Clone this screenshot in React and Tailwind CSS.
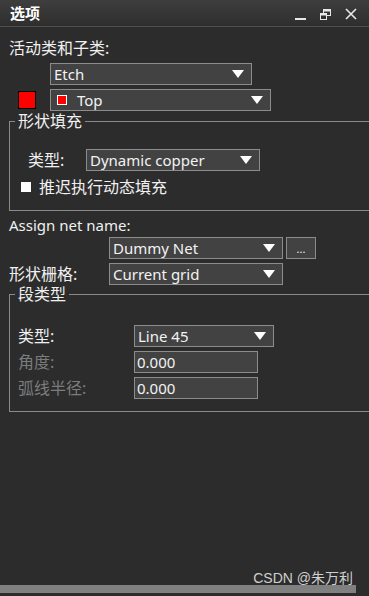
import React from "react";

const font = { fontFamily: '"Noto Sans", "Noto Sans CJK SC", sans-serif' };

const Arrow = () => (
  <svg width="12" height="8" viewBox="0 0 12 8" className="shrink-0">
    <path d="M0 0 H12 L6 8 Z" fill="#ffffff" />
  </svg>
);

const Combo = ({ className, children }) => (
  <div className={`flex items-center h-[22px] border border-[#8c8c8c] bg-[#424242] pl-[3px] pr-[7px] ${className}`}>
    <div className="flex-1 flex items-center text-[15px] leading-none text-[#f2f2f2]">{children}</div>
    <Arrow />
  </div>
);

const Field = ({ className, value }) => (
  <div className={`flex items-center h-[22px] border border-[#8c8c8c] bg-[#424242] pl-[2px] text-[15px] leading-none text-[#f2f2f2] ${className}`}>
    {value}
  </div>
);

const App = () => {
  return (
    <div className="w-[369px] h-[596px] overflow-hidden bg-[#2c2c2c] relative select-none" style={font}>
      {/* Title bar */}
      <div className="h-[27px] flex items-center justify-between bg-gradient-to-b from-[#3e3e3e] to-[#2e2e2e] border-b border-[#4e4e4e] pl-[10px] pr-[12px]">
        <span className="text-[15px] font-bold text-white leading-none">选项</span>
        <div className="flex items-center gap-[14px] pt-[2px]">
          <svg width="11" height="11" viewBox="0 0 11 11">
            <rect x="0" y="9" width="11" height="2" fill="#e8e8e8" />
          </svg>
          <svg width="11" height="11" viewBox="0 0 11 11">
            <rect x="3.5" y="0.5" width="7" height="6" fill="none" stroke="#e8e8e8" />
            <rect x="3.5" y="0.5" width="7" height="2" fill="#e8e8e8" />
            <rect x="0.5" y="4.5" width="6" height="6" fill="#2e2e2e" stroke="#e8e8e8" />
            <rect x="0.5" y="4.5" width="6" height="2" fill="#e8e8e8" />
          </svg>
          <svg width="12" height="12" viewBox="0 0 12 12">
            <path d="M1 1 L11 11 M11 1 L1 11" stroke="#e8e8e8" strokeWidth="1.6" />
          </svg>
        </div>
      </div>

      {/* Active class/subclass */}
      <div className="pl-[9px] pt-[13px] text-[16px] leading-none text-[#f0f0f0]">活动类和子类:</div>
      <div className="flex flex-col gap-[4px] mt-[7px]">
        <Combo className="ml-[50px] w-[202px]">Etch</Combo>
        <div className="flex items-center">
          <div className="ml-[18px] w-[18px] h-[18px] bg-[#ff0000] border border-black" />
          <Combo className="ml-[14px] w-[221px]">
            <span className="ml-[3px] w-[10px] h-[10px] bg-[#ff0000] border border-white" />
            <span className="ml-[10px]">Top</span>
          </Combo>
        </div>
      </div>

      {/* Shape fill group */}
      <fieldset className="ml-[9px] w-[400px] mt-[2px] border border-[#8a8a8a] pt-[20px] h-[98px]">
        <legend className="ml-[5px] px-[3px] text-[16px] leading-none text-[#f0f0f0]">形状填充</legend>
        <div className="flex items-center">
          <span className="ml-[18px] w-[58px] text-[16px] leading-none text-[#f0f0f0]">类型:</span>
          <Combo className="w-[174px]">Dynamic copper</Combo>
        </div>
        <div className="flex items-center mt-[8px]">
          <span className="ml-[11px] w-[10px] h-[10px] bg-white" />
          <span className="ml-[8px] text-[16px] leading-none text-[#f0f0f0]">推迟执行动态填充</span>
        </div>
      </fieldset>

      {/* Net name */}
      <div className="pl-[9px] pt-[7px] text-[15px] leading-none text-[#f0f0f0]">Assign net name:</div>
      <div className="flex items-center mt-[4px] ml-[109px]">
        <Combo className="w-[174px]">Dummy Net</Combo>
        <div className="ml-[3px] w-[30px] h-[22px] border border-[#8c8c8c] bg-[#424242] flex items-end justify-center pb-[4px] text-[11px] leading-none text-[#f0f0f0]">...</div>
      </div>
      <div className="flex items-center mt-[4px]">
        <span className="ml-[9px] w-[100px] text-[16px] leading-none text-[#f0f0f0]">形状栅格:</span>
        <Combo className="w-[174px]">Current grid</Combo>
      </div>

      {/* Segment type group */}
      <fieldset className="ml-[9px] w-[400px] mt-[1px] border border-[#8a8a8a] pt-[23px] h-[126px]">
        <legend className="ml-[5px] px-[3px] text-[16px] leading-none text-[#f0f0f0]">段类型</legend>
        <div className="flex items-center">
          <span className="ml-[8px] w-[116px] text-[16px] leading-none text-[#f0f0f0]">类型:</span>
          <Combo className="w-[140px]">Line 45</Combo>
        </div>
        <div className="flex items-center mt-[4px]">
          <span className="ml-[8px] w-[116px] text-[16px] leading-none text-[#7c7c7c]">角度:</span>
          <Field className="w-[124px]" value="0.000" />
        </div>
        <div className="flex items-center mt-[4px]">
          <span className="ml-[8px] w-[116px] text-[16px] leading-none text-[#7c7c7c]">弧线半径:</span>
          <Field className="w-[124px]" value="0.000" />
        </div>
      </fieldset>

      {/* Watermark and scrollbar */}
      <div className="absolute right-[16px] bottom-[11px] text-[14px] leading-none text-[#d0d0d0]" style={{ fontFamily: '"Liberation Sans", "Noto Sans CJK SC", sans-serif' }}>
        CSDN @朱万利
      </div>
      <div className="absolute left-0 bottom-[3px] w-[356px] h-[8px] bg-[#808080]" />
    </div>
  );
};

export default App;
